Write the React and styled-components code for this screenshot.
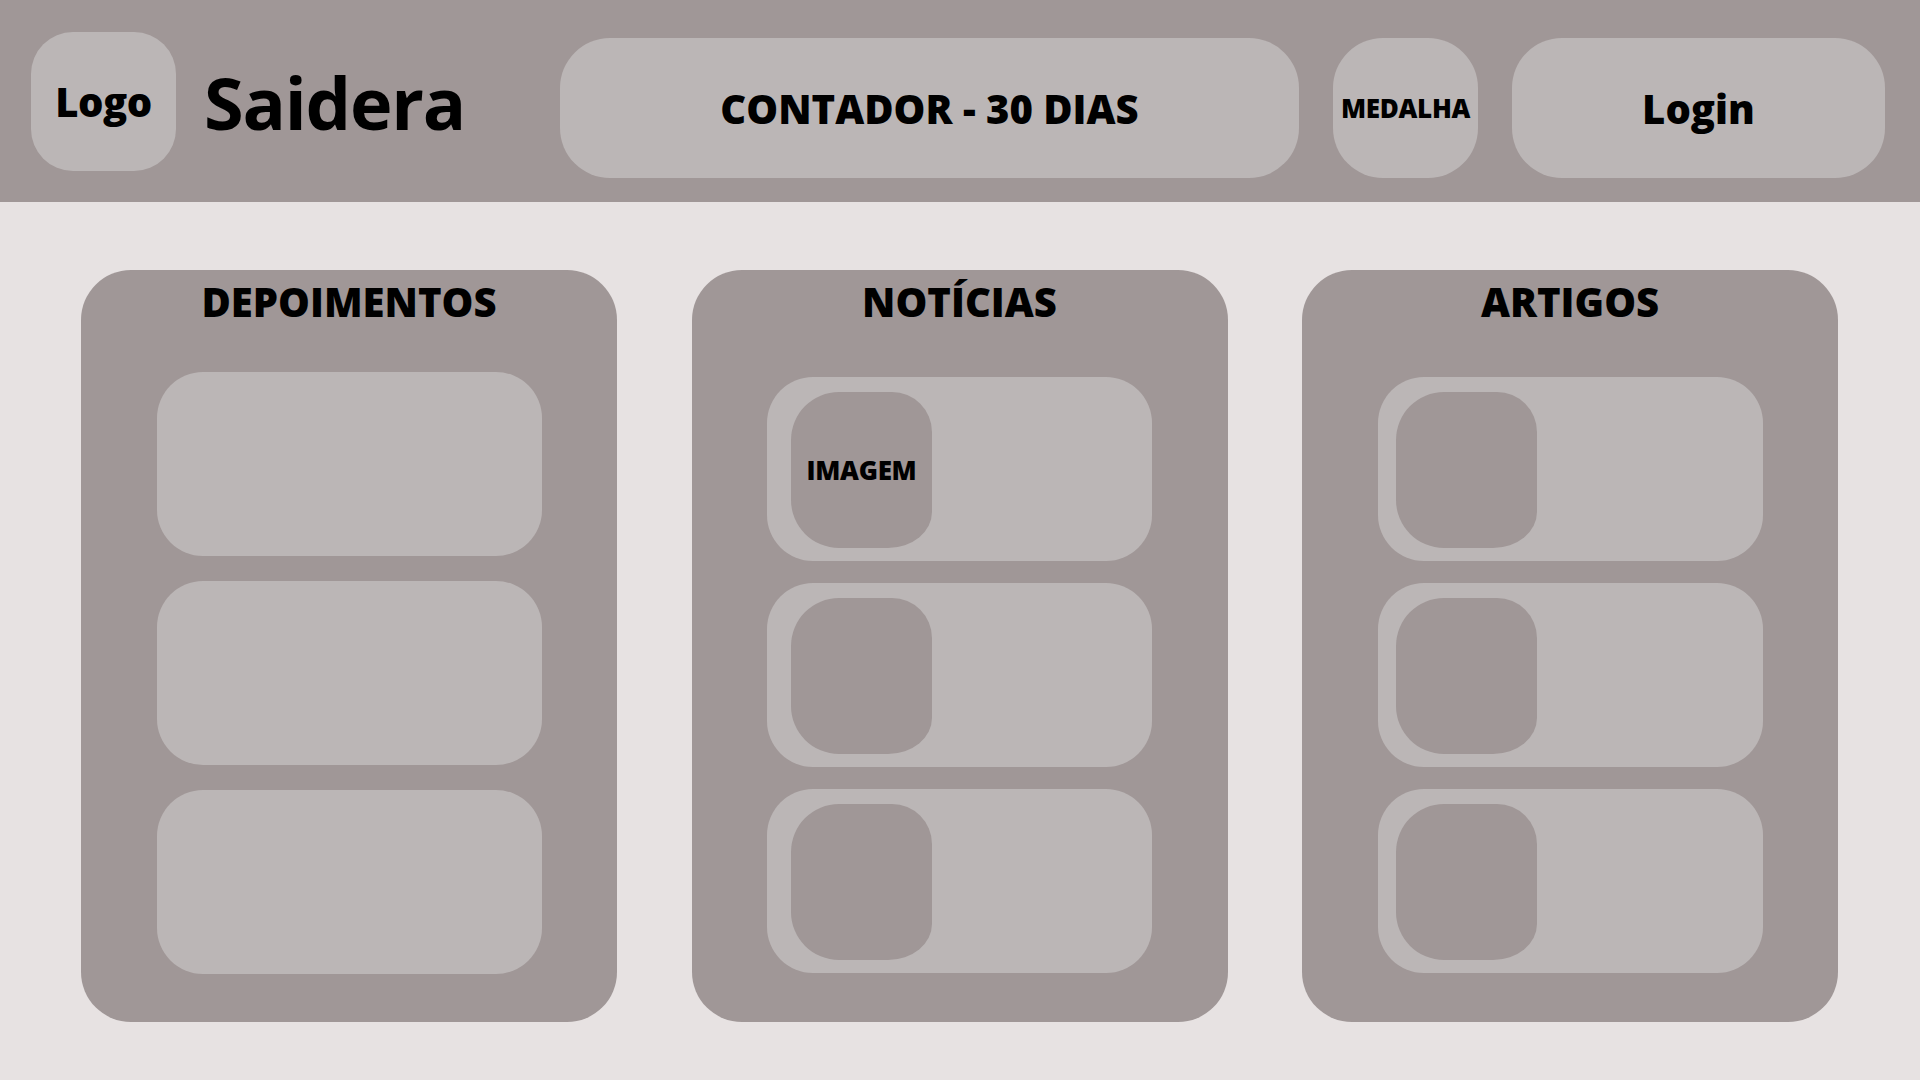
import React from 'react'
import styled, { createGlobalStyle } from 'styled-components'

const GlobalStyle = createGlobalStyle`
  html, body {
    margin: 0;
    padding: 0;
    background: #e7e2e2;
  }
  body {
    font-family: "Open Sans", "Liberation Sans", sans-serif;
    color: #000;
  }
`

const UI = {
  Page: styled.div`
    width: 1920px;
    min-height: 1080px;
    background: #e7e2e2;
  `,
  Header: styled.header`
    height: 202px;
    box-sizing: border-box;
    background: #a09797;
    display: flex;
    align-items: flex-start;
    padding: 38px 35px 0 31px;
  `,
  Logo: styled.div`
    width: 145px;
    height: 139px;
    margin-top: -6px;
    border-radius: 42px;
    background: #bbb6b6;
    display: flex;
    align-items: center;
    justify-content: center;
    font-size: 40px;
    font-weight: 800;
    letter-spacing: -0.5px;
  `,
  Brand: styled.h1`
    margin: -5px 0 0 28px;
    font-size: 72px;
    font-weight: 700;
    line-height: 139px;
    letter-spacing: -1.2px;
  `,
  Actions: styled.div`
    margin-left: auto;
    display: flex;
    gap: 34px;
  `,
  Pill: styled.div`
    width: ${p => p.$w}px;
    height: 140px;
    border-radius: 50px;
    background: #bbb6b6;
    display: flex;
    align-items: center;
    justify-content: center;
    font-size: ${p => p.$size || 40}px;
    font-weight: 800;
    letter-spacing: ${p => (p.$size ? '-0.3px' : '0')};
  `,
  Main: styled.main`
    display: grid;
    grid-template-columns: repeat(3, 536px);
    justify-content: space-between;
    padding: 68px 82px 0 81px;
  `,
  Panel: styled.section`
    height: 752px;
    box-sizing: border-box;
    border-radius: 50px;
    background: #a09797;
    padding-top: 5px;
    display: flex;
    flex-direction: column;
    align-items: center;
  `,
  Title: styled.h2`
    margin: 0;
    font-size: 40px;
    font-weight: 800;
    line-height: 1.362;
  `,
  List: styled.div`
    margin-top: ${p => p.$top}px;
    display: flex;
    flex-direction: column;
    gap: ${p => p.$gap}px;
  `,
  Card: styled.div`
    width: 385px;
    height: 184px;
    box-sizing: border-box;
    border-radius: 46px;
    background: #bbb6b6;
    display: flex;
    align-items: flex-start;
    padding: 15px 0 0 ${p => p.$inset}px;
  `,
  Thumb: styled.div`
    width: 141px;
    height: 156px;
    border-radius: 48px 40px 44px 48px / 48px 40px 36px 48px;
    background: #a09797;
    display: flex;
    align-items: center;
    justify-content: center;
    font-size: 26px;
    font-weight: 800;
    letter-spacing: -0.3px;
  `
}

const panels = [
  { title: 'DEPOIMENTOS', thumbs: false, top: 43, gap: 25 },
  { title: 'NOTÍCIAS', thumbs: true, inset: 24, top: 48, gap: 22 },
  { title: 'ARTIGOS', thumbs: true, inset: 18, top: 48, gap: 22 }
]

function Panel({ title, thumbs, inset, top, gap }) {
  return (
    <UI.Panel>
      <UI.Title>{title}</UI.Title>
      <UI.List $top={top} $gap={gap}>
        {[0, 1, 2].map(i => (
          <UI.Card key={i} $inset={inset || 0}>
            {thumbs && <UI.Thumb>{title === 'NOTÍCIAS' && i === 0 ? 'IMAGEM' : null}</UI.Thumb>}
          </UI.Card>
        ))}
      </UI.List>
    </UI.Panel>
  )
}

export default function App() {
  return (
    <UI.Page>
      <GlobalStyle />
      <UI.Header>
        <UI.Logo>Logo</UI.Logo>
        <UI.Brand>Saidera</UI.Brand>
        <UI.Actions>
          <UI.Pill $w={739}>CONTADOR - 30 DIAS</UI.Pill>
          <UI.Pill $w={145} $size={26}>MEDALHA</UI.Pill>
          <UI.Pill $w={373}>Login</UI.Pill>
        </UI.Actions>
      </UI.Header>
      <UI.Main>
        {panels.map(p => (
          <Panel key={p.title} {...p} />
        ))}
      </UI.Main>
    </UI.Page>
  )
}
